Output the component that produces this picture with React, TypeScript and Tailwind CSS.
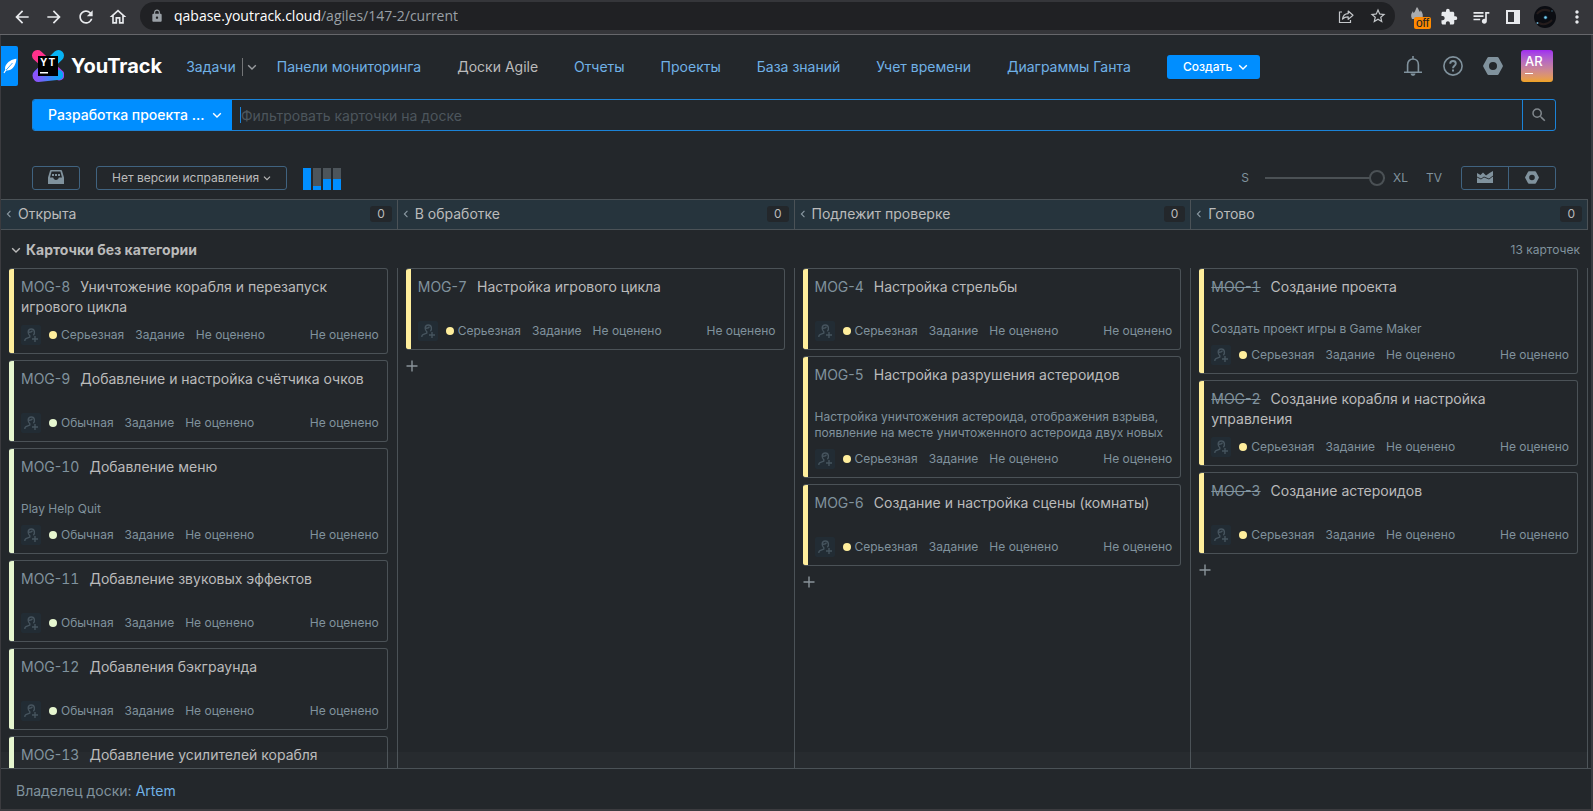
import React from "react";
import {
  MdArrowBack,
  MdArrowForward,
  MdRefresh,
  MdOutlineHome,
  MdLock,
  MdStarBorder,
  MdExtension,
  MdQueueMusic,
  MdMoreVert,
  MdSearch,
} from "react-icons/md";

type Priority = "major" | "normal";

interface Card {
  number: number;
  title: string;
  description?: string;
  priority: Priority;
  resolved?: boolean;
}

interface Column {
  name: string;
  cards: Card[];
}

const columns: Column[] = [
  {
    name: "Открыта",
    cards: [
      { number: 8, title: "Уничтожение корабля и перезапуск игрового цикла", priority: "major" },
      { number: 9, title: "Добавление и настройка счётчика очков", priority: "normal" },
      { number: 10, title: "Добавление меню", description: "Play Help Quit", priority: "normal" },
      { number: 11, title: "Добавление звуковых эффектов", priority: "normal" },
      { number: 12, title: "Добавления бэкграунда", priority: "normal" },
      { number: 13, title: "Добавление усилителей корабля", priority: "normal" },
    ],
  },
  {
    name: "В обработке",
    cards: [{ number: 7, title: "Настройка игрового цикла", priority: "major" }],
  },
  {
    name: "Подлежит проверке",
    cards: [
      { number: 4, title: "Настройка стрельбы", priority: "major" },
      {
        number: 5,
        title: "Настройка разрушения астероидов",
        description:
          "Настройка уничтожения астероида, отображения взрыва, появление на месте уничтоженного астероида двух новых",
        priority: "major",
      },
      { number: 6, title: "Создание и настройка сцены (комнаты)", priority: "major" },
    ],
  },
  {
    name: "Готово",
    cards: [
      {
        number: 1,
        title: "Создание проекта",
        description: "Создать проект игры в Game Maker",
        priority: "major",
        resolved: true,
      },
      { number: 2, title: "Создание корабля и настройка управления", priority: "major", resolved: true },
      { number: 3, title: "Создание астероидов", priority: "major", resolved: true },
    ],
  },
];

const navLinks = [
  "Доски Agile",
  "Отчеты",
  "Проекты",
  "База знаний",
  "Учет времени",
  "Диаграммы Ганта",
];

function Chevron({ className }: { className?: string }) {
  return (
    <svg viewBox="0 0 10 10" fill="none" stroke="currentColor" strokeWidth="1.4" className={className} aria-hidden="true">
      <path d="M1.2 3.2 5 7l3.8-3.8" />
    </svg>
  );
}

function NutIcon({ className }: { className?: string }) {
  return (
    <svg viewBox="0 0 20 18" fill="currentColor" className={className} aria-hidden="true">
      <path
        fillRule="evenodd"
        d="M5.6 0h8.8c.5 0 .9.3 1.2.7l4.1 7.5c.3.5.3 1.1 0 1.6l-4.1 7.5c-.3.4-.7.7-1.2.7H5.6c-.5 0-.9-.3-1.2-.7L.3 9.8c-.3-.5-.3-1.1 0-1.6L4.4.7C4.7.3 5.1 0 5.6 0ZM10 5a4 4 0 1 0 0 8 4 4 0 0 0 0-8Z"
      />
    </svg>
  );
}

function AssigneeIcon() {
  return (
    <svg viewBox="0 0 20 20" fill="none" stroke="#46545e" strokeWidth="1.4" className="size-5 shrink-0 rounded-xs bg-[#222c34]" aria-hidden="true">
      <path d="M12.400 10.300c.9-1 1.200-2.100 1-3.500C13.200 4.900 12 4 10.300 4S7.300 5 7.200 6.900c0 1.700.5 2.900 1.600 3.900v1.300L5 13.700c-.9.400-1.200 1.100-1.200 2.300" />
      <path d="M7.200 7.200c2 .3 3.600-.3 4.300-1.500" />
      <path d="M14 11v6M11 14h6" />
    </svg>
  );
}

function YouTrackLogo() {
  return (
    <svg viewBox="0 0 32 32" className="size-8" aria-hidden="true">
      <defs>
        <linearGradient id="ytPink" x1="0" y1="0" x2="1" y2="1">
          <stop offset="0.2" stopColor="#ff318c" />
          <stop offset="1" stopColor="#8f4bf5" />
        </linearGradient>
        <linearGradient id="ytBlue" x1="1" y1="0" x2="0" y2="1">
          <stop offset="0.2" stopColor="#07b3f5" />
          <stop offset="0.9" stopColor="#7b5cff" />
        </linearGradient>
        <linearGradient id="ytBottom" x1="0" y1="0" x2="1" y2="0">
          <stop offset="0.1" stopColor="#8d52fb" />
          <stop offset="0.9" stopColor="#07a9f3" />
        </linearGradient>
      </defs>
      <path d="M5.500 5.500 27 25" stroke="url(#ytPink)" strokeWidth="11" strokeLinecap="round" />
      <path d="M26.500 5.500 6 25.500" stroke="url(#ytBlue)" strokeWidth="11" strokeLinecap="round" />
      <path d="M5.500 21.500 26 20a5 5 0 0 1 1.500 9.800L6.500 32a5.300 5.300 0 0 1-1-10.500Z" fill="url(#ytBottom)" />
      <rect x="6" y="6" width="20" height="20" fill="#000" />
      <rect x="8" y="22" width="8" height="1.500" fill="#fff" />
      <text x="8" y="15.500" fill="#fff" fontFamily="Inter, sans-serif" fontSize="10" fontWeight="700">
        Y
      </text>
      <text x="16.500" y="15.500" fill="#fff" fontFamily="Inter, sans-serif" fontSize="10" fontWeight="700">
        T
      </text>
    </svg>
  );
}

function BrowserBar() {
  return (
    <div className="flex h-[35px] shrink-0 items-center border-b border-[#66676b] bg-[#35363a] pl-3 text-[#e8eaed]">
      <div className="flex items-center gap-3">
        <button type="button" aria-label="Назад"><MdArrowBack className="size-5" /></button>
        <button type="button" aria-label="Вперёд"><MdArrowForward className="size-5" /></button>
        <button type="button" aria-label="Обновить"><MdRefresh className="size-5" /></button>
        <button type="button" aria-label="Домой"><MdOutlineHome className="size-5" /></button>
      </div>
      <div className="mb-0.5 ml-3 flex h-7 min-w-0 flex-1 items-center rounded-full bg-[#202124] pr-2 pl-2.5">
        <MdLock className="size-3.5 shrink-0 text-[#9aa0a6]" />
        <p className="ml-2.5 truncate font-['Open_Sans','Noto_Sans',sans-serif] text-sm text-[#9aa0a6]">
          <span className="text-white">qabase.youtrack.cloud</span>/agiles/147-2/current
        </p>
        <div className="ml-auto flex items-center gap-[15px] text-[#c4c7ca]">
          <button type="button" aria-label="Поделиться">
            <svg viewBox="0 0 16 16" fill="none" stroke="currentColor" strokeWidth="1.2" className="size-4">
              <path d="M4 4H1.500v10.500h11V12" />
              <path d="M4.500 11c.5-3.600 2.400-5.300 5.700-5.400V3L15 7.200l-4.800 4.200V8.800C7.700 8.700 6 9.400 4.500 11Z" strokeLinejoin="round" />
            </svg>
          </button>
          <button type="button" aria-label="Добавить в закладки"><MdStarBorder className="size-[18px]" /></button>
        </div>
      </div>
      <div className="ml-1.5 flex items-center">
        <button type="button" aria-label="Расширение" className="relative flex h-6 w-8 justify-center pt-0.5">
          <svg viewBox="0 0 14 14" fill="#a9abae" className="size-3.5">
            <path d="M7 0c2 2 1.500 3.500 3 5 .5-.5.6-1.200.5-2C13 6 13.500 9 12 12H2C.5 9 1 6.500 3 4c0 1 .2 1.600.7 2C5.500 4.500 5.500 2 7 0Z" />
          </svg>
          <span className="absolute right-0.5 bottom-0 rounded-xs bg-[#ff8a00] px-0.5 font-['Liberation_Sans',sans-serif] text-xs leading-3 text-[#202124]">off</span>
        </button>
        <button type="button" aria-label="Расширения" className="flex w-8 justify-center"><MdExtension className="size-[18px]" /></button>
        <button type="button" aria-label="Управление музыкой" className="flex w-8 justify-center"><MdQueueMusic className="size-5" /></button>
        <button type="button" aria-label="Боковая панель" className="flex w-8 justify-center">
          <svg viewBox="0 0 14 14" className="size-3.5">
            <path fill="currentColor" fillRule="evenodd" d="M0 0h14v14H0V0Zm2 2v10h6V2H2Z" />
          </svg>
        </button>
        <button type="button" aria-label="Профиль" className="flex w-8 justify-center">
          <svg viewBox="0 0 22 22" className="size-[22px]">
            <circle cx="11" cy="11" r="11" fill="#0b0d12" />
            <path d="M3 8c3-4 8-5 13-3M5 17c4 2 9 1 13-3" stroke="#241c1c" strokeWidth="2" fill="none" />
            <circle cx="11.500" cy="11.500" r="2" fill="#17445c" />
            <circle cx="11.500" cy="11.500" r="1.200" fill="#7fd4f5" />
            <circle cx="3.500" cy="17" r="1" fill="#6aa9c8" />
            <circle cx="18" cy="5" r="0.800" fill="#39647a" />
          </svg>
        </button>
        <button type="button" aria-label="Меню" className="flex w-8 justify-center"><MdMoreVert className="size-5" /></button>
      </div>
    </div>
  );
}

function Header() {
  return (
    <header className="flex h-[62px] shrink-0 items-center text-sm">
      <a href="#feedback" aria-label="Отзыв" className="flex h-10 w-[17px] items-center justify-center rounded-r-xs bg-[#008eff] text-white">
        <svg viewBox="0 0 14 16" className="h-4 w-3.5">
          <path fill="currentColor" d="M13.500.8C9 1.200 4.600 3.800 2.700 7.600c-.7 1.500-.8 3-.4 4.200L.5 14.800l.9.500 1.900-2.700c3 .2 6.200-1.500 8-4.600C12.500 5.800 13.300 3.300 13.500.8Z" />
          <path d="M3.200 12 9.500 5" stroke="#008eff" strokeWidth="0.800" />
        </svg>
      </a>
      <a href="#home" className="ml-3.5 flex items-center gap-[7px] font-['Inter',sans-serif] text-xl font-bold text-white">
        <YouTrackLogo />
        YouTrack
      </a>
      <nav className="ml-6 flex items-center gap-9 pt-0.5 text-[#70b1e6]">
        <div className="flex items-center gap-5">
          <div className="flex items-center">
            <a href="#issues">Задачи</a>
            <button type="button" aria-label="Ещё задачи" className="ml-1.5 flex h-[18px] items-center border-l border-[#737577] pl-1 text-[#9a9da0]">
              <Chevron className="size-2.5" />
            </button>
          </div>
          <a href="#dashboards">Панели мониторинга</a>
        </div>
        {navLinks.map((label) => (
          <a key={label} href={"#" + label} className={label === "Доски Agile" ? "text-[#bbbbbb]" : ""}>
            {label}
          </a>
        ))}
        <button type="button" aria-haspopup="menu" className="flex h-6 items-center gap-1.5 rounded-[3px] bg-[#008eff] px-4 pr-3 text-xs font-medium text-white">
          Создать
          <Chevron className="size-2.5" />
        </button>
      </nav>
      <div className="mr-[38px] ml-auto flex items-center gap-[18px] text-[#80929d]">
        <div className="flex items-center gap-5">
          <button type="button" aria-label="Уведомления">
            <svg viewBox="0 0 20 20" fill="none" stroke="currentColor" strokeWidth="1.6" className="size-5">
              <path d="M10 0v3M1 16.200h18M4.600 16V8.700C4.600 5.400 6.800 3 10 3s5.400 2.400 5.400 5.700V16" />
              <path d="M7.500 17.500h5c-.3 1.500-1.200 2.300-2.500 2.300s-2.200-.8-2.500-2.300Z" fill="currentColor" stroke="none" />
            </svg>
          </button>
          <button type="button" aria-label="Справка">
            <svg viewBox="0 0 20 20" fill="none" stroke="currentColor" strokeWidth="1.6" className="size-5">
              <circle cx="10" cy="10" r="9.100" />
              <path d="M7.200 7.800C7.200 6.100 8.300 5 10 5s2.800 1 2.800 2.500c0 2.200-2.800 2.300-2.800 4.700" strokeWidth="1.900" />
              <path d="M10 13.500v2" strokeWidth="2" />
            </svg>
          </button>
          <button type="button" aria-label="Администрирование"><NutIcon className="h-[18px] w-5" /></button>
        </div>
        <button type="button" aria-label="Профиль AR" className="flex size-8 flex-col items-start rounded-[3px] bg-linear-to-b from-[#a128f0] to-[#efa31b] pt-[3px] pl-1 text-[13px] leading-4 font-medium text-white">
          AR
          <span className="mt-1 h-px w-2 bg-white" />
        </button>
      </div>
    </header>
  );
}

function SearchBar() {
  return (
    <form className="mt-0.5 mr-[35px] ml-[31px] flex h-8 shrink-0 overflow-hidden rounded-[3px] border border-[#1b83d8] text-sm">
      <div className="relative bg-[#008eff] text-white">
        <select aria-label="Доска" className="h-full w-[199px] appearance-none pl-[15px] font-medium outline-none">
          <option>Разработка проекта ...</option>
        </select>
        <Chevron className="pointer-events-none absolute top-2.5 right-2.5 size-2.5" />
      </div>
      <div className="flex min-w-0 flex-1 items-center pl-2">
        <span className="h-4 w-px bg-[#1b83d8]" />
        <input aria-label="Фильтр" placeholder="Фильтровать карточки на доске" className="h-full min-w-0 flex-1 text-[#bbbbbb] outline-none placeholder:text-[#4d565d]" />
      </div>
      <button type="submit" aria-label="Найти" className="flex w-[33px] items-center justify-center border-l border-[#1b83d8] text-[#80878c]">
        <MdSearch className="size-[18px]" />
      </button>
    </form>
  );
}

function Toolbar() {
  return (
    <div className="mt-[35px] mr-[35px] ml-[31px] flex h-6 shrink-0 items-center text-xs text-[#80929d]">
      <button type="button" aria-label="Бэклог" className="flex h-6 w-12 items-center justify-center rounded-[3px] border border-[#406380] pb-0.5">
        <svg viewBox="0 0 16 14" className="h-3.5 w-4" fill="currentColor">
          <path fillRule="evenodd" d="M3 0h10c.5 0 .8.2 1 .7l2 6.800V14H0V7.500L2 .7c.2-.5.5-.7 1-.7Zm.6 1.500L2 7.500h3.200c.3 1.600 1.300 2.500 2.800 2.500s2.500-.9 2.800-2.500H14l-1.600-6H3.600Z" />
          <path d="M4 4h2v2H4zM7 4h2v2H7zM10 4h2v2h-2z" />
        </svg>
      </button>
      <div className="relative ml-4 text-xs text-[#bbbbbb]">
        <select aria-label="Версия исправления" className="block h-6 w-[191px] appearance-none rounded-[3px] border border-[#406380] pl-[15px] outline-none">
          <option>Нет версии исправления</option>
        </select>
        <Chevron className="pointer-events-none absolute top-2 right-4 size-2" />
      </div>
      <button type="button" aria-label="Распределение карточек" className="mt-0.5 ml-4 flex h-[22px] gap-0.5">
        <span className="h-full w-2 bg-[#008eff]" />
        <span className="flex h-full w-2 items-end bg-[#4d555b]"><span className="h-1 w-full bg-[#008eff]" /></span>
        <span className="flex h-full w-2 items-end bg-[#4d555b]"><span className="h-[11px] w-full bg-[#008eff]" /></span>
        <span className="flex h-full w-2 items-end bg-[#4d555b]"><span className="h-[11px] w-full bg-[#008eff]" /></span>
      </button>
      <label htmlFor="card-size" className="ml-auto">S</label>
      <input
        id="card-size"
        type="range"
        min={0}
        max={3}
        defaultValue={3}
        aria-label="Размер карточек"
        className="mr-2 ml-4 h-4 w-[120px] appearance-none bg-transparent [&::-webkit-slider-runnable-track]:h-0.5 [&::-webkit-slider-runnable-track]:bg-[#4b5155] [&::-webkit-slider-thumb]:-mt-[7px] [&::-webkit-slider-thumb]:size-4 [&::-webkit-slider-thumb]:appearance-none [&::-webkit-slider-thumb]:rounded-full [&::-webkit-slider-thumb]:border-2 [&::-webkit-slider-thumb]:border-[#4b5155] [&::-webkit-slider-thumb]:bg-[#23272b]"
      />
      <span>XL</span>
      <button type="button" className="ml-[18px]">TV</button>
      <div className="ml-[19px] flex h-6 divide-x divide-[#406380] rounded-[3px] border border-[#406380]">
        <button type="button" aria-label="Отчёт" className="flex w-[47px] items-center justify-center pb-0.5">
          <svg viewBox="0 0 16 12" className="h-3 w-4" fill="currentColor">
            <path d="M0 2 3.500 4 6 1.500 9 4.500 12.500 2 16 0v12H0V2Z" />
            <path d="M0 6 4 8l3-2 5 2 4-3" fill="none" stroke="#23272b" strokeWidth="0.900" />
          </svg>
        </button>
        <button type="button" aria-label="Настройки доски" className="flex w-[46px] items-center justify-center pb-0.5">
          <NutIcon className="h-[13px] w-3.5" />
        </button>
      </div>
    </div>
  );
}

function CardTile({ card }: { card: Card }) {
  const major = card.priority === "major";
  return (
    <article className="flex overflow-hidden rounded-[3px] border border-l-0 border-[#4b5257]">
      <div className={major ? "w-[5px] shrink-0 bg-[#ffee9c]" : "w-[5px] shrink-0 bg-[#e6f6cf]"} />
      <div className="min-w-0 flex-1 py-2 pr-2 pl-[7px]">
        <h3 className="min-h-9 text-sm leading-5 text-[#bbbbbb]">
          <a
            href={"#MOG-" + card.number}
            className={card.resolved ? "mr-2.5 text-[#80929d] line-through" : "mr-2.5 text-[#80929d]"}
          >
            MOG-<span className="tabular-nums">{card.number}</span>
          </a>
          {card.title}
        </h3>
        {card.description && <p className="mt-2 text-xs leading-4 text-[#80929d]">{card.description}</p>}
        <div className="mt-2 flex h-5 items-center text-xs text-[#80929d]">
          <AssigneeIcon />
          <span className={major ? "ml-2 size-2 rounded-full bg-[#ffee9c]" : "ml-2 size-2 rounded-full bg-[#e6f6cf]"} />
          <span className="ml-1">{major ? "Серьезная" : "Обычная"}</span>
          <span className="ml-[11px]">Задание</span>
          <span className="ml-[11px]">Не оценено</span>
          <span className="ml-auto">Не оценено</span>
        </div>
      </div>
    </article>
  );
}

export default function App() {
  return (
    <div className="flex h-screen flex-col bg-[#23272b] font-['Inter',sans-serif] text-[#bbbbbb]">
      <BrowserBar />
      <div className="flex min-h-0 flex-1 flex-col border-r-2 border-b-2 border-l border-[#3b3b3f]">
        <Header />
        <SearchBar />
        <Toolbar />
        <main className="mt-[9px] mr-[3px] flex min-h-0 flex-1 flex-col">
          <div className="grid h-[31px] shrink-0 grid-cols-4 border-y border-[#4b5257] bg-[#26343d]">
            {columns.map((column) => (
              <div key={column.name} className="flex items-center border-r border-[#4b5257] pr-[5px] pb-px pl-1">
                <button type="button" aria-label={"Свернуть " + column.name} className="text-[#8a98a2]">
                  <Chevron className="size-2 rotate-90" />
                </button>
                <h2 className="ml-[5px] text-sm">{column.name}</h2>
                <span className="ml-auto rounded-[3px] bg-[#23272b] px-[7px] text-xs leading-4">0</span>
              </div>
            ))}
          </div>
          <div className="relative flex min-h-0 flex-1 flex-col">
            <div className="min-h-0 flex-1 overflow-y-auto [scrollbar-width:none]">
              <div className="flex min-h-full flex-col">
                <div className="flex h-[38px] shrink-0 items-center pt-0.5 pr-2 pl-2.5">
                  <button type="button" className="flex items-center gap-[5px] text-sm font-bold">
                    <Chevron className="size-2.5" />
                    Карточки без категории
                  </button>
                  <span className="ml-auto text-xs text-[#80929d]">13 карточек</span>
                </div>
                <div className="grid flex-1 grid-cols-4">
                  {columns.map((column, index) => (
                    <section key={column.name} aria-label={column.name} className="flex flex-col gap-1.5 border-r border-[#4b5257] pr-[9px] pl-2">
                      {column.cards.map((card) => (
                        <CardTile key={card.number} card={card} />
                      ))}
                      {index > 0 && (
                        <button type="button" aria-label="Добавить карточку" className="flex size-5 items-center text-[#8a949b]">
                          <svg viewBox="0 0 12 12" className="size-3" stroke="currentColor" strokeWidth="1.4">
                            <path d="M6 .5v11M.5 6h11" />
                          </svg>
                        </button>
                      )}
                    </section>
                  ))}
                </div>
              </div>
            </div>
            <div className="pointer-events-none absolute inset-x-0 bottom-0 h-4 bg-white/2" />
          </div>
        </main>
        <footer className="flex h-[41px] shrink-0 items-center gap-1 border-t border-[#4b5257] pt-1 pl-[15px] text-sm text-[#80929d]">
          Владелец доски:
          <a href="#artem" className="text-[#70b1e6]">Artem</a>
        </footer>
      </div>
    </div>
  );
}
